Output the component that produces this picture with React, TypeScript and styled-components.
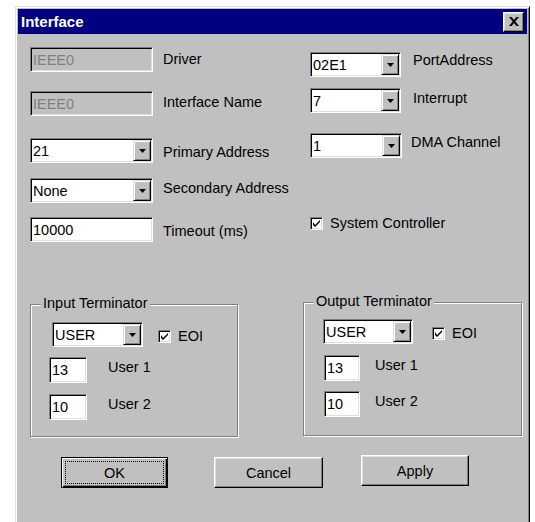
import styled, { createGlobalStyle } from 'styled-components';

const FACE = '#c0c0c0';
const SHADOW = '#808080';
const LIGHT = '#dfdfdf';

const GlobalStyle = createGlobalStyle`
  html, body {
    margin: 0;
    height: 100%;
    background: #fff;
    overflow: hidden;
  }
  body {
    font-family: 'Liberation Sans', Arial, sans-serif;
    font-size: 14.5px;
    color: #000;
  }
`;

const Window = styled.div`
  box-sizing: border-box;
  width: 515px;
  height: 530px;
  margin: 6px 0 0 15px;
  padding: 2px;
  background: ${FACE};
  border: 1px solid;
  border-color: ${LIGHT} #000 #000 ${LIGHT};
  box-shadow: inset 1px 1px #fff, inset -1px -1px ${SHADOW};
`;

const TitleBar = styled.div`
  display: flex;
  align-items: center;
  justify-content: space-between;
  height: 25px;
  padding: 0 3px;
  background: #000080;
`;

const Title = styled.span`
  color: #fff;
  font-weight: bold;
  font-size: 15px;
`;

const CloseButton = styled.div`
  box-sizing: border-box;
  display: flex;
  align-items: center;
  justify-content: center;
  width: 21px;
  height: 20px;
  background: ${FACE};
  border: 1px solid;
  border-color: #fff #000 #000 #fff;
  box-shadow: inset -1px -1px ${SHADOW}, inset 1px 1px ${LIGHT};
`;

const Body = styled.div`
  padding: 13px 0 0 12px;
`;

const TopGrid = styled.div`
  display: grid;
  grid-template-columns: 280px 1fr;
  align-items: start;
`;

const Column = styled.div<{ $pt?: number }>`
  display: flex;
  flex-direction: column;
  padding-top: ${({ $pt }) => $pt ?? 0}px;
`;

const Row = styled.div<{ $mt?: number; $gap?: number; $ml?: number }>`
  display: flex;
  align-items: flex-start;
  gap: ${({ $gap }) => $gap ?? 10}px;
  margin-top: ${({ $mt }) => $mt ?? 0}px;
  margin-left: ${({ $ml }) => $ml ?? 0}px;
`;

const CheckRow = styled.div<{ $mt?: number; $ml?: number }>`
  display: flex;
  align-items: center;
  gap: 7px;
  margin-top: ${({ $mt }) => $mt ?? 0}px;
  margin-left: ${({ $ml }) => $ml ?? 0}px;
`;

const Label = styled.span<{ $dy?: number }>`
  line-height: 17px;
  margin-top: ${({ $dy }) => $dy ?? 0}px;
  white-space: nowrap;
`;

const Field = styled.div<{ $w: number; $h?: number; $disabled?: boolean }>`
  box-sizing: border-box;
  display: flex;
  align-items: center;
  width: ${({ $w }) => $w}px;
  height: ${({ $h }) => $h ?? 25}px;
  padding-left: 2px;
  background: ${({ $disabled }) => ($disabled ? FACE : '#fff')};
  color: ${({ $disabled }) => ($disabled ? SHADOW : '#000')};
  border: 1px solid;
  border-color: ${SHADOW} #fff #fff ${SHADOW};
  box-shadow: inset 1px 1px #000, inset -1px -1px ${LIGHT};
  white-space: nowrap;
`;

const FieldText = styled.span`
  flex: 1;
`;

const DropButton = styled.div`
  box-sizing: border-box;
  display: flex;
  align-items: center;
  justify-content: center;
  width: 18px;
  height: 21px;
  margin-right: 1px;
  background: ${FACE};
  border: 1px solid;
  border-color: ${LIGHT} #000 #000 ${LIGHT};
  box-shadow: inset 1px 1px #fff, inset -1px -1px ${SHADOW};
`;

const CheckBox = styled.div`
  box-sizing: border-box;
  display: flex;
  align-items: center;
  justify-content: center;
  width: 13px;
  height: 13px;
  flex-shrink: 0;
  background: #fff;
  border: 1px solid;
  border-color: ${SHADOW} #fff #fff ${SHADOW};
  box-shadow: inset 1px 1px #000, inset -1px -1px ${LIGHT};
`;

const GroupsRow = styled.div`
  display: flex;
  align-items: flex-start;
  gap: 65px;
  margin-top: 60px;
`;

const Group = styled.div<{ $w: number; $h: number; $mt: number; $pt: number; $pl: number }>`
  position: relative;
  box-sizing: border-box;
  width: ${({ $w }) => $w}px;
  height: ${({ $h }) => $h}px;
  margin-top: ${({ $mt }) => $mt}px;
  padding: ${({ $pt }) => $pt}px 0 0 ${({ $pl }) => $pl}px;
  border: 1px solid ${SHADOW};
  box-shadow: inset 1px 1px #fff, 1px 1px #fff;
`;

const Legend = styled.span`
  position: absolute;
  top: -10px;
  left: 10px;
  padding: 0 2px;
  line-height: 17px;
  background: ${FACE};
  white-space: nowrap;
`;

const ButtonRow = styled.div`
  display: flex;
  align-items: flex-start;
  margin: 18px 0 0 31px;
`;

const PushButton = styled.div<{ $w: number; $mt?: number; $ml?: number; $isDefault?: boolean }>`
  box-sizing: border-box;
  display: flex;
  width: ${({ $w }) => $w}px;
  height: 31px;
  margin-top: ${({ $mt }) => $mt ?? 0}px;
  margin-left: ${({ $ml }) => $ml ?? 0}px;
  background: ${FACE};
  border: 1px solid;
  border-color: ${({ $isDefault }) => ($isDefault ? '#000' : '#fff #000 #000 #fff')};
  box-shadow: ${({ $isDefault }) =>
    $isDefault
      ? `inset 1px 1px #fff, inset -1px -1px #000, inset -2px -2px ${SHADOW}`
      : `inset -1px -1px ${SHADOW}, inset 1px 1px ${LIGHT}`};
`;

const ButtonFace = styled.span<{ $focused?: boolean }>`
  flex: 1;
  display: flex;
  align-items: center;
  justify-content: center;
  margin: 3px;
  border: 1px dotted ${({ $focused }) => ($focused ? '#000' : 'transparent')};
`;

const Arrow = () => (
  <svg width="7" height="4" viewBox="0 0 7 4">
    <path d="M0 0h7L3.5 4z" fill="#000" />
  </svg>
);

const CheckMark = () => (
  <svg width="7" height="7" viewBox="0 0 7 7">
    <path d="M0 2L0 5L2 7L7 2L7 0L2 5Z" fill="#000" />
  </svg>
);

const CloseGlyph = () => (
  <svg width="10" height="9" viewBox="0 0 10 9">
    <path d="M0 0h2.6l2.4 2.9L7.4 0H10L6.3 4.5 10 9H7.4L5 6.1 2.6 9H0l3.7-4.5z" fill="#000" />
  </svg>
);

const ComboBox = ({ value, width }: { value: string; width: number }) => (
  <Field $w={width}>
    <FieldText>{value}</FieldText>
    <DropButton>
      <Arrow />
    </DropButton>
  </Field>
);

const Check = () => (
  <CheckBox>
    <CheckMark />
  </CheckBox>
);

export default function App() {
  return (
    <>
      <GlobalStyle />
      <Window>
        <TitleBar>
          <Title>Interface</Title>
          <CloseButton>
            <CloseGlyph />
          </CloseButton>
        </TitleBar>
        <Body>
          <TopGrid>
            <Column>
              <Row>
                <Field $w={123} $disabled>
                  <FieldText>IEEE0</FieldText>
                </Field>
                <Label $dy={4}>Driver</Label>
              </Row>
              <Row $mt={19}>
                <Field $w={123} $disabled>
                  <FieldText>IEEE0</FieldText>
                </Field>
                <Label $dy={3}>Interface Name</Label>
              </Row>
              <Row $mt={22}>
                <ComboBox value="21" width={123} />
                <Label $dy={6}>Primary Address</Label>
              </Row>
              <Row $mt={15}>
                <ComboBox value="None" width={123} />
                <Label $dy={2}>Secondary Address</Label>
              </Row>
              <Row $mt={14}>
                <Field $w={123}>
                  <FieldText>10000</FieldText>
                </Field>
                <Label $dy={6}>Timeout (ms)</Label>
              </Row>
            </Column>
            <Column $pt={5}>
              <Row $gap={12}>
                <ComboBox value="02E1" width={91} />
                <Label $dy={0}>PortAddress</Label>
              </Row>
              <Row $gap={12} $mt={11}>
                <ComboBox value="7" width={91} />
                <Label $dy={2}>Interrupt</Label>
              </Row>
              <Row $gap={9} $mt={20}>
                <ComboBox value="1" width={92} />
                <Label $dy={1}>DMA Channel</Label>
              </Row>
              <CheckRow $mt={57}>
                <Check />
                <Label>System Controller</Label>
              </CheckRow>
            </Column>
          </TopGrid>

          <GroupsRow>
            <Group $w={208} $h={133} $mt={2} $pt={17} $pl={18}>
              <Legend>Input Terminator</Legend>
              <Row $gap={15} $ml={3}>
                <ComboBox value="USER" width={91} />
                <CheckRow $mt={6}>
                  <Check />
                  <Label>EOI</Label>
                </CheckRow>
              </Row>
              <Row $gap={21} $mt={10}>
                <Field $w={38} $h={26}>
                  <FieldText>13</FieldText>
                </Field>
                <Label $dy={2}>User 1</Label>
              </Row>
              <Row $gap={21} $mt={11}>
                <Field $w={38} $h={26}>
                  <FieldText>10</FieldText>
                </Field>
                <Label $dy={2}>User 2</Label>
              </Row>
            </Group>

            <Group $w={219} $h={134} $mt={0} $pt={16} $pl={19}>
              <Legend>Output Terminator</Legend>
              <Row $gap={19}>
                <ComboBox value="USER" width={90} />
                <CheckRow $mt={6}>
                  <Check />
                  <Label>EOI</Label>
                </CheckRow>
              </Row>
              <Row $gap={15} $mt={11} $ml={1}>
                <Field $w={36} $h={26}>
                  <FieldText>13</FieldText>
                </Field>
                <Label $dy={2}>User 1</Label>
              </Row>
              <Row $gap={15} $mt={10} $ml={1}>
                <Field $w={36} $h={26}>
                  <FieldText>10</FieldText>
                </Field>
                <Label $dy={2}>User 2</Label>
              </Row>
            </Group>
          </GroupsRow>

          <ButtonRow>
            <PushButton $w={107} $mt={2} $isDefault>
              <ButtonFace $focused>OK</ButtonFace>
            </PushButton>
            <PushButton $w={109} $mt={2} $ml={46}>
              <ButtonFace>Cancel</ButtonFace>
            </PushButton>
            <PushButton $w={108} $ml={38}>
              <ButtonFace>Apply</ButtonFace>
            </PushButton>
          </ButtonRow>
        </Body>
      </Window>
    </>
  );
}
